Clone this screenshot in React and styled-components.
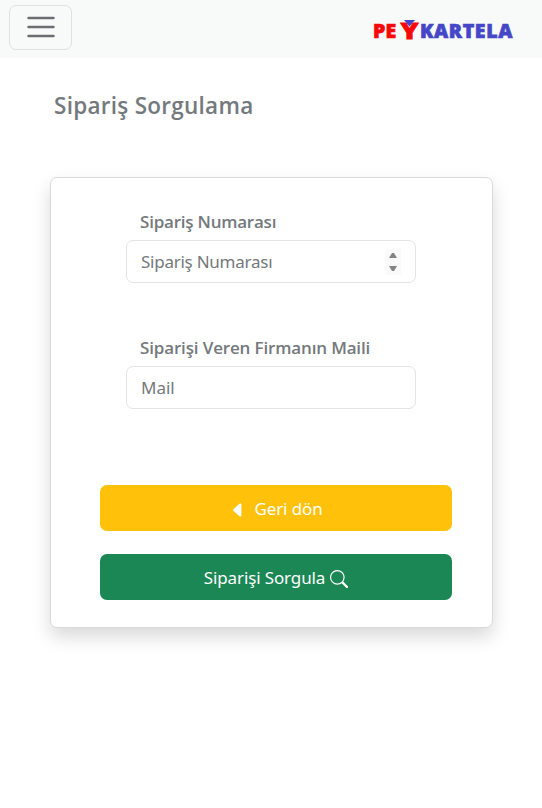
import React from "react";
import styled, { createGlobalStyle } from "styled-components";
import { BsSearch, BsCaretLeftFill } from "react-icons/bs";

const GlobalStyle = createGlobalStyle`
  *, *::before, *::after { box-sizing: border-box; }
  body {
    margin: 0;
    min-height: 100vh;
    background: #fff;
    color: #73797d;
    font-family: "Noto Sans", "Open Sans", sans-serif;
    font-size: 17px;
  }
`;

const Navbar = styled.header`
  display: flex;
  align-items: flex-start;
  justify-content: space-between;
  height: 58px;
  padding: 5px 27px 0 9px;
  background: #f8faf9;
`;

const Toggler = styled.button`
  display: grid;
  place-items: center;
  width: 63px;
  height: 45px;
  padding: 0 0 1px;
  border: 1px solid #dfe1e1;
  border-radius: 7px;
  background: transparent;
`;

const Logo = styled.div`
  display: flex;
  align-items: baseline;
  height: 28px;
  margin-top: 10px;
  font-family: "Open Sans", sans-serif;
  font-size: 19.5px;
  font-weight: 800;
  line-height: 28px;
`;

const LogoPart = styled.span`
  width: ${({ $width }) => $width}px;
  color: ${({ $color }) => $color};
  letter-spacing: ${({ $spacing }) => $spacing}px;
  -webkit-text-stroke: 0.7px currentColor;
  white-space: nowrap;
`;

const LogoMark = styled.span`
  position: relative;
  width: 21px;
  color: #fa0808;
  font-size: 23px;
  text-align: center;

  svg {
    position: absolute;
    left: 5px;
    top: 5px;
  }
`;

const LogoLetter = styled.span`
  display: inline-block;
  line-height: 26px;
  transform: translateY(1px) scaleX(1.18);
  -webkit-text-stroke: 0.8px currentColor;
`;

const Main = styled.main`
  padding: 32px 49px 0 50px;
`;

const Title = styled.h1`
  margin: 0;
  padding-left: 4px;
  font-family: "Open Sans", sans-serif;
  font-size: 22.5px;
  font-weight: 600;
  line-height: 32px;
  letter-spacing: ${({ $spacing }) => $spacing}px;
  white-space: nowrap;
`;

const Card = styled.form`
  display: flex;
  flex-direction: column;
  height: 451px;
  margin-top: 55px;
  padding: 31px 40px 0 49px;
  border: 1px solid #d9dadb;
  border-radius: 7px;
  background: #fff;
  box-shadow: 0 9px 18px rgba(0, 0, 0, 0.15);
`;

const Field = styled.div`
  margin: 0 36px ${({ $gap }) => $gap}px 26px;
`;

const Label = styled.label`
  display: block;
  height: 31px;
  padding-left: 14px;
  font-family: "Open Sans", sans-serif;
  font-weight: 600;
  line-height: 26px;
  letter-spacing: ${({ $spacing }) => $spacing}px;
  white-space: nowrap;
`;

const InputBox = styled.div`
  display: flex;
  align-items: center;
  justify-content: space-between;
  height: 43px;
  padding: 0 14px 0 14px;
  border: 1px solid #e2e4e6;
  border-radius: 7px;
`;

const Input = styled.input`
  flex: 1;
  min-width: 0;
  padding: 0;
  border: 0;
  outline: 0;
  background: transparent;
  font: inherit;
  letter-spacing: ${({ $spacing }) => $spacing}px;

  &::placeholder {
    color: #74787b;
    opacity: 1;
  }
`;

const Spinner = styled.span`
  display: grid;
  place-items: center;
  width: 16px;
  height: 26px;
  background: #fafafa;
`;

const Button = styled.button`
  display: flex;
  align-items: center;
  justify-content: center;
  gap: ${({ $gap }) => $gap}px;
  height: 46px;
  margin-bottom: 23px;
  padding: 0;
  border: 0;
  border-radius: 7px;
  background: ${({ $color }) => $color};
  color: #fff;
  font: inherit;
  letter-spacing: ${({ $spacing }) => $spacing}px;
  white-space: nowrap;

  svg {
    margin-top: 3px;
  }
`;

export default function App() {
  return (
    <>
      <GlobalStyle />
      <Navbar>
        <Toggler type="button" aria-label="Menü">
          <svg width="34" height="34" viewBox="0 0 30 30" fill="none">
            <path
              d="M4 7h22M4 15h22M4 23h22"
              stroke="#6b6d70"
              strokeWidth="2.2"
              strokeLinecap="round"
            />
          </svg>
        </Toggler>
        <Logo>
          <LogoPart $color="#fa0808" $width={26} $spacing={0.2}>PE</LogoPart>
          <LogoMark>
            <LogoLetter>Y</LogoLetter>
            <svg width="11" height="7" viewBox="0 0 11 7">
              <path d="M0 0h11L5.5 6.5z" fill="#4646c8" />
            </svg>
          </LogoMark>
          <LogoPart $color="#4646c8" $width={95} $spacing={0.65}>KARTELA</LogoPart>
        </Logo>
      </Navbar>
      <Main>
        <Title $spacing={0.27}>Sipariş Sorgulama</Title>
        <Card onSubmit={(event) => event.preventDefault()}>
          <Field $gap={52}>
            <Label htmlFor="order" $spacing={-0.22}>Sipariş Numarası</Label>
            <InputBox>
              <Input id="order" placeholder="Sipariş Numarası" $spacing={-0.25} />
              <Spinner>
                <svg width="8" height="20" viewBox="0 0 8 20" fill="#858585">
                  <path d="M3 1h2l3 5H0zM0 14h8l-3 5H3z" />
                </svg>
              </Spinner>
            </InputBox>
          </Field>
          <Field $gap={76}>
            <Label htmlFor="mail" $spacing={-0.15}>Siparişi Veren Firmanın Maili</Label>
            <InputBox>
              <Input id="mail" placeholder="Mail" $spacing={0} />
            </InputBox>
          </Field>
          <Button type="button" $color="#ffc10a" $gap={7} $spacing={-0.1}>
            <BsCaretLeftFill size={18} />
            Geri dön
          </Button>
          <Button type="submit" $color="#1b8755" $gap={5} $spacing={-0.12}>
            Siparişi Sorgula
            <BsSearch size={18} />
          </Button>
        </Card>
      </Main>
    </>
  );
}
